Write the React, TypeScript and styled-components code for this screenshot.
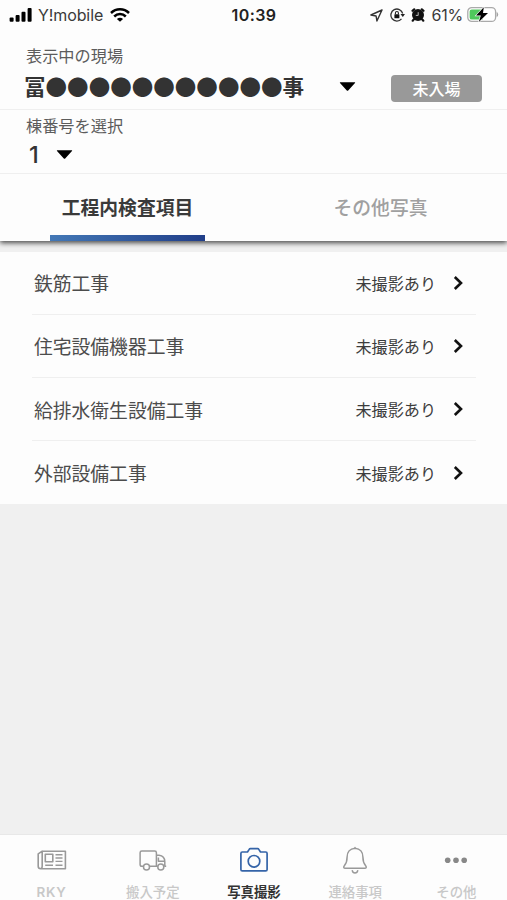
import React from "react";
import styled, { createGlobalStyle } from "styled-components";

const Global = createGlobalStyle`
  * { box-sizing: border-box; }
  body { margin: 0; background: #f0f0f0; font-family: "Noto Sans CJK JP", sans-serif; }
`;

const Screen = styled.div`
  width: 507px;
  height: 900px;
  display: flex;
  flex-direction: column;
  background: #f0f0f0;
  overflow: hidden;
`;

const Header = styled.header`
  background: #fdfdfd;
  box-shadow: 0 2px 5px rgba(0, 0, 0, 0.7);
  z-index: 1;
`;

const StatusBar = styled.div`
  height: 30px;
  padding: 0 8px 0 9px;
  display: grid;
  grid-template-columns: 1fr auto 1fr;
  align-items: center;
  font-family: Inter, sans-serif;
  font-size: 16px;
  color: #3a3a3a;
`;

const StatusGroup = styled.div<{ $end?: boolean }>`
  display: flex;
  align-items: center;
  justify-content: ${(p) => (p.$end ? "flex-end" : "flex-start")};
`;

const Carrier = styled.span`
  margin: 0 7px 0 6px;
  letter-spacing: -0.1px;
`;

const Clock = styled.span`
  font-weight: 600;
  font-size: 16px;
  letter-spacing: 0.4px;
  color: #222;
`;

const Percent = styled.span`
  margin: 0 4px 0 6px;
  letter-spacing: -0.2px;
`;

const Icon = styled.svg<{ $left?: number }>`
  display: block;
  flex: none;
  margin-left: ${(p) => p.$left ?? 0}px;
`;

const Field = styled.section<{ $height: number; $top: number }>`
  height: ${(p) => p.$height}px;
  padding: ${(p) => p.$top}px 25px 0 24px;
  border-bottom: 1px solid #efefef;
`;

const FieldLabel = styled.div`
  padding-left: 2px;
  height: 20px;
  font-size: 16.2px;
  line-height: 20px;
  color: #5c5c5c;
`;

const FieldRow = styled.div<{ $offset?: number }>`
  height: 30px;
  margin-top: ${(p) => p.$offset ?? 0}px;
  display: flex;
  align-items: center;
`;

const SiteName = styled.span`
  width: 315px;
  font-size: 21.55px;
  line-height: 30px;
  font-weight: 700;
  color: #333;
  white-space: nowrap;
`;

const Building = styled.span`
  width: 32px;
  padding: 1px 0 0 5px;
  font-family: Inter, sans-serif;
  font-size: 23.5px;
  line-height: 30px;
  font-weight: 500;
  color: #333;
`;

const EntryBadge = styled.span`
  width: 91px;
  height: 27px;
  margin: 5px 0 0 auto;
  border-radius: 4px;
  background: #999;
  color: #fff;
  font-size: 16px;
  line-height: 26px;
  font-weight: 500;
  text-align: center;
`;

const Tabs = styled.nav`
  height: 67px;
  padding-left: 1px;
  display: grid;
  grid-template-columns: 1fr 1fr;
`;

const Tab = styled.button<{ $active?: boolean }>`
  border: 0;
  padding: 19px 0 0;
  background: none;
  display: flex;
  flex-direction: column;
  align-items: center;
  justify-content: space-between;
  font: 500 18.8px/28px "Noto Sans CJK JP", sans-serif;
  font-weight: ${(p) => (p.$active ? 700 : 500)};
  color: ${(p) => (p.$active ? "#3a3a3a" : "#a0a0a0")};

  &::after {
    content: "";
    width: 155px;
    height: 6px;
    background: ${(p) => (p.$active ? "linear-gradient(90deg, #4378b6, #213e89)" : "none")};
  }
`;

const List = styled.ul`
  list-style: none;
  margin: 10.5px 0 0;
  padding: 0 31px 0 32px;
  background: #fdfdfd;
`;

const Item = styled.li`
  height: 63.3px;
  padding: 0 12px 0 2px;
  display: flex;
  align-items: center;
  border-bottom: 1px solid #efefef;

  &:last-child { height: 62.6px; border-bottom: 0; }
`;

const ItemName = styled.span`
  flex: 1;
  font-size: 18.8px;
  color: #4c4c4c;
`;

const ItemState = styled.span`
  font-size: 16.1px;
  color: #3c3c3c;
  margin-right: 17px;
`;

const BottomBar = styled.nav`
  height: 66px;
  margin-top: auto;
  padding-left: 1px;
  display: grid;
  grid-template-columns: repeat(5, 101.2px);
  background: #fdfdfd;
  border-top: 1px solid #e8e8e8;
`;

const NavItem = styled.a<{ $active?: boolean }>`
  display: flex;
  flex-direction: column;
  align-items: center;
  padding-top: 10px;
  color: ${(p) => (p.$active ? "#3564a8" : "#999")};
`;

const NavLabel = styled.span<{ $active?: boolean; $latin?: boolean }>`
  margin-top: ${(p) => (p.$latin ? 9 : 8)}px;
  font-family: ${(p) => (p.$latin ? "Inter, sans-serif" : '"Noto Sans CJK JP", sans-serif')};
  font-size: 13.4px;
  line-height: 17px;
  height: 17px;
  letter-spacing: ${(p) => (p.$latin ? "0.8px" : "0")};
  font-weight: ${(p) => (p.$active ? 700 : p.$latin ? 600 : 500)};
  color: ${(p) => (p.$active ? "#333" : "#c8c8c8")};
`;

const Caret = () => (
  <Icon width="17" height="12" viewBox="0 0 17 12">
    <path d="M1.2 2.2h14.6q.7.2.2.9l-6.8 7.4q-.7.6-1.4 0L1 3.1q-.5-.7.2-.9z" fill="#000" />
  </Icon>
);

const Chevron = () => (
  <Icon width="11" height="14" viewBox="0 0 11 14">
    <path d="M1.8 1 8 7l-6.2 6" fill="none" stroke="#111" strokeWidth="2.6" />
  </Icon>
);

const SignalIcon = () => (
  <Icon width="23" height="15" viewBox="0 0 23 15">
    <g fill="#000">
      <rect x=".6" y="9.5" width="4" height="4.3" rx="1" />
      <rect x="6.6" y="7" width="4" height="6.8" rx="1" />
      <rect x="12.5" y="3.7" width="4" height="10.1" rx="1" />
      <rect x="18.6" y="0" width="4" height="13.8" rx="1" />
    </g>
  </Icon>
);

const WifiIcon = () => (
  <Icon width="20" height="15" viewBox="0 0 20 15">
    <g fill="none" stroke="#000" strokeWidth="2.5">
      <path d="M1 5a12.8 12.8 0 0 1 18 0" />
      <path d="M4.2 8.5a8.2 8.2 0 0 1 11.6 0" />
    </g>
    <path d="M10 13.8 6.9 10.9q3.1-2.2 6.2 0z" fill="#000" />
  </Icon>
);

const LocationIcon = () => (
  <Icon width="13" height="13" viewBox="0 0 13 13">
    <path d="M12 1 .9 6l5.2 1 .8 5z" fill="none" stroke="#333" strokeWidth="1.4" strokeLinejoin="round" />
  </Icon>
);

const RotationLockIcon = () => (
  <Icon width="15" height="14" viewBox="0 0 15 14" $left={7}>
    <path d="M12.7 5.5a6 6 0 1 0-1.2 5.4" fill="none" stroke="#333" strokeWidth="1.3" />
    <path d="m10.5 6 2.3 2.9L15 6z" fill="#222" />
    <rect x="4.4" y="6.2" width="5" height="4" rx=".5" fill="#111" />
    <path d="M5.4 6.3V5a1.5 1.5 0 0 1 3 0v1.3" fill="none" stroke="#222" strokeWidth="1.1" />
  </Icon>
);

const AlarmIcon = () => (
  <Icon width="14" height="14" viewBox="0 0 14 14" $left={6}>
    <circle cx="7" cy="7" r="6" fill="#111" />
    <path d="m1.5 2.8 1.7-1.5M10.8 1.3l1.7 1.5M2.7 11.5l-1 1.2M11.3 11.5l1 1.2" stroke="#111" strokeWidth="2.2" strokeLinecap="round" />
    <path d="M7.2 4.2v3.2H4.8" fill="none" stroke="#ccc" strokeWidth=".9" />
  </Icon>
);

const BatteryIcon = () => (
  <Icon width="32" height="18" viewBox="0 0 32 18">
    <rect x=".8" y="1.6" width="27.8" height="13.8" rx="4" fill="#fff" stroke="#aaa" strokeWidth="1.3" />
    <path d="M4.8 3.4H16v10.2H4.8q-2.2 0-2.2-2.2V5.6q0-2.2 2.2-2.2z" fill="#4fc95c" />
    <path d="M30 6.5v4q1.5-2 0-4z" fill="#999" stroke="#999" strokeWidth=".6" />
    <path d="M16.8 1.2 9 9.6h4.8L11.8 16l9.2-8.9h-5z" fill="#000" stroke="#fff" strokeWidth="1.2" paintOrder="stroke" />
  </Icon>
);

const NewsIcon = () => (
  <Icon width="30" height="30" viewBox="0 0 30 30">
    <g fill="none" stroke="currentColor" strokeWidth="1.6" strokeLinejoin="round">
      <path d="M5.2 6.2h23.2v17.5H3.8q-2.6 0-2.6-2.5V8.8l4-2.6V21q0 2.5-1.5 2.5" />
      <rect x="8.3" y="9.3" width="7.5" height="7.5" />
      <path d="M18.5 9.7h7M18.5 13h7M18.5 16.4h7M8.2 20.2h7.8M18.5 20.2h7" strokeWidth="1.4" />
    </g>
  </Icon>
);

const TruckIcon = () => (
  <Icon width="30" height="30" viewBox="0 0 30 30">
    <g fill="none" stroke="currentColor" strokeWidth="1.5" strokeLinejoin="round">
      <path d="M5.5 21.3H3.8q-1.7 0-1.7-1.7V7.8q0-1.7 1.7-1.7h12.9q1.7 0 1.7 1.7v13.5h-6.8M18.4 10.2h2.6q5.8.6 5.8 6.5v4.6h1.4M18.4 21.3h1.3M20.4 12.4v3.8h6.2" />
      <circle cx="8.5" cy="22" r="3" />
      <circle cx="22.8" cy="22" r="3" />
    </g>
  </Icon>
);

const CameraIcon = () => (
  <Icon width="30" height="30" viewBox="0 0 30 30">
    <g fill="none" stroke="currentColor" strokeWidth="1.7" strokeLinejoin="round">
      <path d="M3.3 7h5.2l1.7-2.6q.4-.8 1.2-.8h7.2q.8 0 1.2.8L21.5 7h5.2q1.4 0 1.4 1.4v16.1q0 1.4-1.4 1.4H3.3q-1.4 0-1.4-1.4V8.4Q1.9 7 3.3 7z" />
      <circle cx="15" cy="16.3" r="5.8" />
    </g>
  </Icon>
);

const BellIcon = () => (
  <Icon width="30" height="30" viewBox="0 0 30 30">
    <g fill="none" stroke="currentColor" strokeWidth="1.5" strokeLinejoin="round" strokeLinecap="round">
      <path d="M15 3.2c-5.3.3-7.9 4.3-7.9 8.8 0 4-.8 6.3-2.6 8.5-1.4 1.8-.8 2.8.8 2.8h19.4c1.6 0 2.2-1 .8-2.8-1.8-2.2-2.6-4.5-2.6-8.5 0-4.5-2.6-8.5-7.9-8.8zM15 3.1V2.5" />
      <path d="M12.3 25.7q.4 2.3 2.7 2.3t2.7-2.3" />
    </g>
  </Icon>
);

const MoreIcon = () => (
  <Icon width="30" height="30" viewBox="0 0 30 30">
    <g fill="#888">
      <circle cx="6.7" cy="15.3" r="2.8" />
      <circle cx="15" cy="15.3" r="2.8" />
      <circle cx="23.2" cy="15.3" r="2.8" />
    </g>
  </Icon>
);

const works = ["鉄筋工事", "住宅設備機器工事", "給排水衛生設備工事", "外部設備工事"];

const navItems = [
  { label: "RKY", icon: NewsIcon, latin: true },
  { label: "搬入予定", icon: TruckIcon },
  { label: "写真撮影", icon: CameraIcon, active: true },
  { label: "連絡事項", icon: BellIcon },
  { label: "その他", icon: MoreIcon },
];

export default function App() {
  return (
    <Screen>
      <Global />
      <Header>
        <StatusBar>
          <StatusGroup>
            <SignalIcon />
            <Carrier>Y!mobile</Carrier>
            <WifiIcon />
          </StatusGroup>
          <Clock>10:39</Clock>
          <StatusGroup $end>
            <LocationIcon />
            <RotationLockIcon />
            <AlarmIcon />
            <Percent>61%</Percent>
            <BatteryIcon />
          </StatusGroup>
        </StatusBar>
        <Field $height={80} $top={15}>
          <FieldLabel>表示中の現場</FieldLabel>
          <FieldRow $offset={6}>
            <SiteName>冨●●●●●●●●●●●事</SiteName>
            <Caret />
            <EntryBadge>未入場</EntryBadge>
          </FieldRow>
        </Field>
        <Field $height={64} $top={5}>
          <FieldLabel>棟番号を選択</FieldLabel>
          <FieldRow $offset={4}>
            <Building>1</Building>
            <Caret />
          </FieldRow>
        </Field>
        <Tabs>
          <Tab $active>工程内検査項目</Tab>
          <Tab>その他写真</Tab>
        </Tabs>
      </Header>
      <List>
        {works.map((name) => (
          <Item key={name}>
            <ItemName>{name}</ItemName>
            <ItemState>未撮影あり</ItemState>
            <Chevron />
          </Item>
        ))}
      </List>
      <BottomBar>
        {navItems.map(({ label, icon: NavIcon, active, latin }) => (
          <NavItem key={label} $active={active}>
            <NavIcon />
            <NavLabel $active={active} $latin={latin}>{label}</NavLabel>
          </NavItem>
        ))}
      </BottomBar>
    </Screen>
  );
}
